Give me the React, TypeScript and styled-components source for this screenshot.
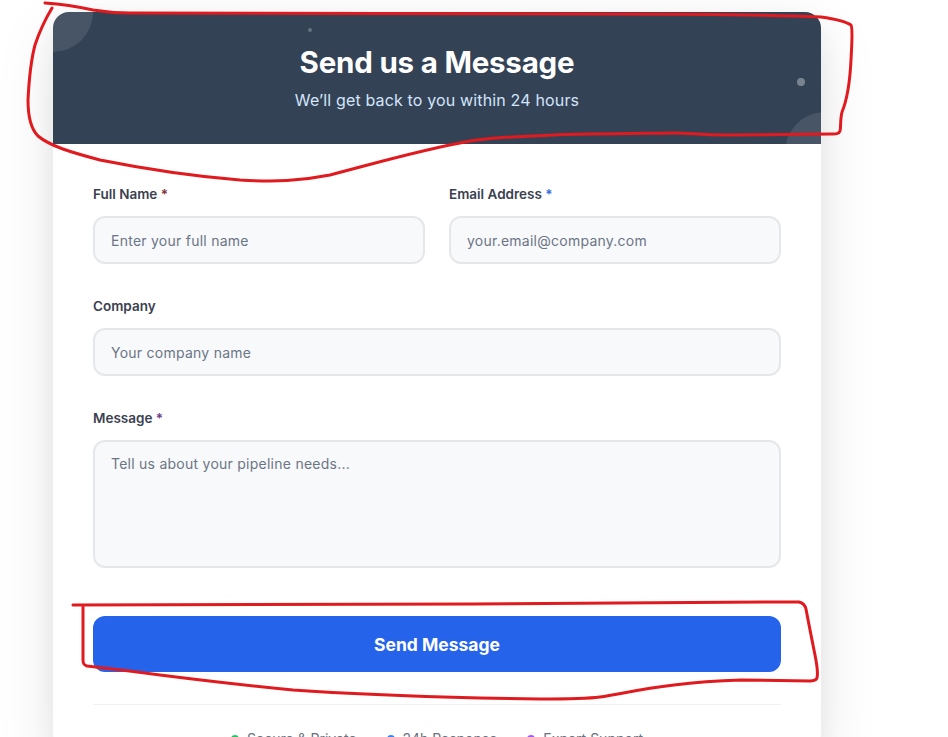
import React from "react";
import styled, { createGlobalStyle } from "styled-components";

const Global = createGlobalStyle`
  html, body { margin: 0; padding: 0; background: #ffffff; }
  body { font-family: "Inter", "Noto Sans", sans-serif; overflow: hidden; }
  * { box-sizing: border-box; }
`;

const Page = styled.div`
  position: relative;
  width: 948px;
  height: 737px;
  overflow: hidden;
  padding: 12px 0 0 53px;
`;

const Card = styled.div`
  position: relative;
  width: 768px;
  background: #ffffff;
  border-radius: 16px;
  box-shadow: 0 20px 60px rgba(15, 23, 42, 0.1), 0 8px 24px rgba(15, 23, 42, 0.05);
  &::before {
    content: "";
    position: absolute;
    inset: -6px -4px auto -4px;
    height: 60px;
    border-radius: 20px;
    background: linear-gradient(180deg, #e6efff 0%, rgba(230, 239, 255, 0) 100%);
    filter: blur(3px);
    z-index: -1;
  }
`;

const Header = styled.div`
  position: relative;
  overflow: hidden;
  background: #344256;
  border-radius: 16px 16px 0 0;
  padding: 32px 32px 32px;
  text-align: center;
  display: flex;
  flex-direction: column;
  align-items: center;
  gap: 8px;
`;

const Bubble = styled.span<{ $size: number; $top?: number; $left?: number; $right?: number; $bottom?: number; $alpha: number }>`
  position: absolute;
  width: ${(p) => p.$size}px;
  height: ${(p) => p.$size}px;
  border-radius: 50%;
  background: rgba(255, 255, 255, ${(p) => p.$alpha});
  ${(p) => (p.$top !== undefined ? `top: ${p.$top}px;` : "")}
  ${(p) => (p.$left !== undefined ? `left: ${p.$left}px;` : "")}
  ${(p) => (p.$right !== undefined ? `right: ${p.$right}px;` : "")}
  ${(p) => (p.$bottom !== undefined ? `bottom: ${p.$bottom}px;` : "")}
`;

const Title = styled.h2`
  margin: 0;
  color: #ffffff;
  font-size: 29.5px;
  line-height: 36px;
  font-weight: 700;
  letter-spacing: -0.2px;
`;

const Subtitle = styled.p`
  margin: 0;
  color: #d3e5fb;
  font-size: 16px;
  line-height: 24px;
  font-weight: 400;
  letter-spacing: 0.15px;
`;

const Body = styled.form`
  padding: 40px 40px 0;
  display: flex;
  flex-direction: column;
`;

const Row = styled.div`
  display: grid;
  grid-template-columns: 1fr 1fr;
  gap: 24px;
`;

const Field = styled.div<{ $mb: number }>`
  display: flex;
  flex-direction: column;
  gap: 12px;
  margin-bottom: ${(p) => p.$mb}px;
`;

const Label = styled.label`
  font-size: 13.5px;
  line-height: 20px;
  font-weight: 600;
  color: #3a4150;
`;

const Star = styled.span<{ $c: string }>`
  color: ${(p) => p.$c};
`;

const Input = styled.input`
  height: 48px;
  width: 100%;
  border: 2px solid #e5e7eb;
  border-radius: 12px;
  background: #f8f9fb;
  padding: 0 16px;
  font-family: inherit;
  font-size: 14px;
  letter-spacing: 0.25px;
  color: #111827;
  outline: none;
  &::placeholder { color: #6b7585; }
`;

const TextArea = styled.textarea`
  height: 128px;
  width: 100%;
  border: 2px solid #e5e7eb;
  border-radius: 12px;
  background: #f8f9fb;
  padding: 12px 16px;
  font-family: inherit;
  font-size: 14px;
  letter-spacing: 0.25px;
  line-height: 20px;
  color: #111827;
  resize: none;
  outline: none;
  &::placeholder { color: #6b7585; }
`;

const Button = styled.button`
  margin-top: 16px;
  height: 56px;
  width: 100%;
  border: none;
  border-radius: 12px;
  background: #2563eb;
  color: #ffffff;
  font-family: inherit;
  font-size: 17.5px;
  font-weight: 700;
  cursor: pointer;
`;

const Footer = styled.div`
  margin-top: 32px;
  border-top: 1px solid #f1f2f4;
  padding-top: 24px;
  display: flex;
  justify-content: center;
  gap: 30px;
`;

const Badge = styled.div`
  display: flex;
  align-items: center;
  gap: 8px;
  font-size: 14px;
  line-height: 20px;
  color: #6b7280;
`;

const Dot = styled.span<{ $c: string }>`
  width: 8px;
  height: 8px;
  border-radius: 50%;
  background: ${(p) => p.$c};
`;

const Marks = styled.svg`
  position: absolute;
  left: 0;
  top: 0;
  pointer-events: none;
`;

export default function App() {
  return (
    <>
      <Global />
      <Page>
        <Card>
          <Header>
            <Bubble $size={80} $top={-40} $left={-40} $alpha={0.1} />
            <Bubble $size={80} $bottom={-48} $right={-44} $alpha={0.1} />
            <Bubble $size={4} $top={16} $left={255} $alpha={0.25} />
            <Bubble $size={8} $top={66} $right={16} $alpha={0.35} />
            <Title>Send us a Message</Title>
            <Subtitle>We’ll get back to you within 24 hours</Subtitle>
          </Header>
          <Body onSubmit={(e) => e.preventDefault()}>
            <Row>
              <Field $mb={32}>
                <Label>
                  Full Name <Star $c="#7a2e36">*</Star>
                </Label>
                <Input placeholder="Enter your full name" />
              </Field>
              <Field $mb={32}>
                <Label>
                  Email Address <Star $c="#2f6dd6">*</Star>
                </Label>
                <Input placeholder="your.email@company.com" />
              </Field>
            </Row>
            <Field $mb={32}>
              <Label>Company</Label>
              <Input placeholder="Your company name" />
            </Field>
            <Field $mb={32}>
              <Label>
                Message <Star $c="#6b3a7e">*</Star>
              </Label>
              <TextArea placeholder="Tell us about your pipeline needs..." />
            </Field>
            <Button type="submit">Send Message</Button>
            <Footer>
              <Badge>
                <Dot $c="#22c55e" />
                Secure &amp; Private
              </Badge>
              <Badge>
                <Dot $c="#3b82f6" />
                24h Response
              </Badge>
              <Badge>
                <Dot $c="#a855f7" />
                Expert Support
              </Badge>
            </Footer>
          </Body>
        </Card>
        <Marks width={948} height={737} viewBox="0 0 948 737">
          <path
            d="M45,3 C60,4 75,6 93,10 C105,12 112,13 130,13 L600,14 C700,14 780,15 821,17 C835,19 845,21 851,25 C853,28 852,40 851,60 C850,80 847,100 842,112 C840,120 841,128 840,131 C839,134 836,134 830,134 L727,135 C700,135 690,133 674,133 C600,134 520,134 470,141 C420,150 380,162 330,175 C300,181 275,182 240,180 C190,176 140,168 100,160 C70,152 50,146 38,136 C30,128 28,115 28,100 C29,80 31,60 35,45 C40,30 46,18 52,8"
            fill="none"
            stroke="#e01a1e"
            strokeWidth={3}
            strokeLinecap="round"
            strokeLinejoin="round"
          />
          <path
            d="M73,605 L474,604 C600,603 700,602 774,602 L799,602 C803,603 805,605 806,609 C808,620 812,640 815,655 C817,665 818,674 817,678 C816,680 814,681 810,681 L741,680 C710,681 690,683 674,685 C640,689 620,694 600,697 C585,699 570,699 540,699 L480,698 C400,696 350,694 293,690 C240,685 200,680 160,675 C130,671 105,668 87,666 C84,665 83,664 83,660 L83,607"
            fill="none"
            stroke="#e01a1e"
            strokeWidth={3}
            strokeLinecap="round"
            strokeLinejoin="round"
          />
        </Marks>
      </Page>
    </>
  );
}
